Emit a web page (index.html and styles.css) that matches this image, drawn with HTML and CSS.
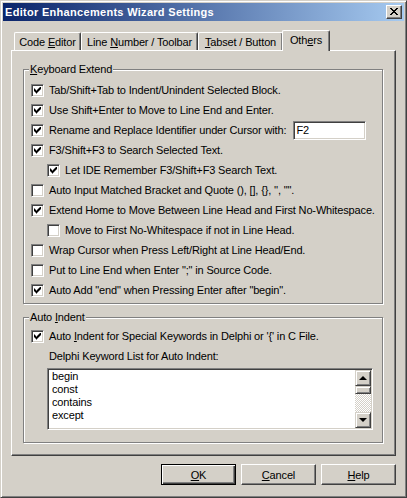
FILE: index.html
```
<!DOCTYPE html>
<html>
<head>
<meta charset="utf-8">
<link rel="stylesheet" href="styles.css">
</head>
<body>
<div class="window">
  <div class="titlebar">
    <span class="title">Editor Enhancements Wizard Settings</span>
    <span class="close"><svg width="16" height="14" viewBox="0 0 16 14"><path d="M4 3h2v1h1v1h2v-1h1v-1h2v1h-1v1h-1v1h-1v1h1v1h1v1h1v1h-2v-1h-1v-1h-2v1h-1v1h-2v-1h1v-1h1v-1h1v-1h-1v-1h-1v-1h-1z" fill="#000" shape-rendering="crispEdges"/></svg></span>
  </div>
  <div class="client">
    <div class="tabs">
      <div class="tab t1"><span>Code <u>E</u>ditor</span></div>
      <div class="tab t2"><span>Line <u>N</u>umber / Toolbar</span></div>
      <div class="tab t3"><span><u>T</u>abset / Button</span></div>
      <div class="tab t4 selected"><span>Oth<u>e</u>rs</span></div>
    </div>
    <div class="panel">
      <fieldset class="group g1">
        <legend><u>K</u>eyboard Extend</legend>
        <div class="row"><span class="cb checked"></span><span>Tab/Shift+Tab to Indent/Unindent Selected Block.</span></div>
        <div class="row"><span class="cb checked"></span><span>Use Shift+Enter to Move to Line End and Enter.</span></div>
        <div class="row"><span class="cb checked"></span><span>Rename and Replace Identifier under Cursor with:</span><span class="edit">F2</span></div>
        <div class="row"><span class="cb checked"></span><span>F3/Shift+F3 to Search Selected Text.</span></div>
        <div class="row sub"><span class="cb checked"></span><span>Let IDE Remember F3/Shift+F3 Search Text.</span></div>
        <div class="row"><span class="cb"></span><span>Auto Input Matched Bracket and Quote (), [], {}, '', "".</span></div>
        <div class="row"><span class="cb checked"></span><span>Extend Home to Move Between Line Head and First No-Whitespace.</span></div>
        <div class="row sub"><span class="cb"></span><span>Move to First No-Whitespace if not in Line Head.</span></div>
        <div class="row"><span class="cb"></span><span>Wrap Cursor when Press Left/Right at Line Head/End.</span></div>
        <div class="row"><span class="cb"></span><span>Put to Line End when Enter ";" in Source Code.</span></div>
        <div class="row"><span class="cb checked"></span><span>Auto Add "end" when Pressing Enter after "begin".</span></div>
      </fieldset>
      <fieldset class="group g2">
        <legend>Auto <u>I</u>ndent</legend>
        <div class="row"><span class="cb checked"></span><span>Auto <u>I</u>ndent for Special Keywords in Delphi or '{' in C File.</span></div>
        <div class="row plain"><span>Delphi Keyword List for Auto Indent:</span></div>
        <div class="listbox">
          <div class="items">
            <div>begin</div>
            <div>const</div>
            <div>contains</div>
            <div>except</div>
          </div>
          <div class="scrollbar">
            <div class="sbtn"><span class="arrow up"></span></div>
            <div class="thumb"></div>
            <div class="track"></div>
            <div class="sbtn"><span class="arrow down"></span></div>
          </div>
        </div>
      </fieldset>
    </div>
    <div class="buttons">
      <div class="btn default"><span><u>O</u>K</span></div>
      <div class="btn"><span><u>C</u>ancel</span></div>
      <div class="btn"><span><u>H</u>elp</span></div>
    </div>
  </div>
</div>
</body>
</html>
```
FILE: styles.css
```
html, body {
  margin: 0;
  padding: 0;
  background: #D4D0C8;
}
body {
  font-family: "Liberation Sans", Arial, sans-serif;
  font-size: 11px;
  letter-spacing: -0.15px;
  color: #000;
}
.window {
  width: 407px;
  height: 498px;
  box-sizing: border-box;
  border: 1px solid;
  border-color: #D4D0C8 #404040 #404040 #D4D0C8;
  box-shadow: inset 1px 1px 0 #fff, inset -1px -1px 0 #808080;
  padding: 2px;
  display: flex;
  flex-direction: column;
  background: #D4D0C8;
}
.titlebar {
  height: 18px;
  flex: none;
  background: linear-gradient(to right, #0A246A, #A6CAF0);
  display: flex;
  align-items: center;
  padding: 0 2px;
}
.title {
  flex: 1;
  color: #fff;
  font-weight: bold;
  font-size: 11px;
  letter-spacing: 0.3px;
  white-space: nowrap;
}
.close {
  width: 16px;
  height: 14px;
  box-sizing: border-box;
  background: #D4D0C8;
  border: 1px solid;
  border-color: #fff #404040 #404040 #fff;
  box-shadow: inset -1px -1px 0 #808080;
  display: block;
}
.close svg {
  display: block;
  margin: -1px;
}
.client {
  flex: 1;
  display: flex;
  flex-direction: column;
  padding: 9px 8px 10px 8px;
}
.tabs {
  display: flex;
  height: 20px;
  padding-left: 3px;
  flex: none;
}
.tab {
  box-sizing: border-box;
  height: 18px;
  margin-top: 2px;
  border-left: 1px solid #fff;
  border-top: 1px solid #fff;
  border-right: 1px solid #404040;
  box-shadow: inset -1px 0 0 #808080;
  border-radius: 2px 2px 0 0;
  display: flex;
  align-items: center;
  justify-content: center;
  white-space: nowrap;
  padding-top: 1px;
}
.t1 { width: 67px; }
.t2 { width: 117px; }
.t3 { width: 85px; }
.t4 { width: 48px; }
.tab.selected {
  height: 21px;
  margin-top: 0;
  margin-left: -1px;
  margin-bottom: -1px;
  position: relative;
  z-index: 1;
  background: #D4D0C8;
  padding-top: 0;
  padding-bottom: 3px;
}
.panel {
  flex: 1;
  box-sizing: border-box;
  border: 1px solid;
  border-color: #fff #404040 #404040 #fff;
  box-shadow: inset -1px -1px 0 #808080;
  padding: 12px 12px 0 11px;
  display: flex;
  flex-direction: column;
}
.group {
  margin: 0;
  padding: 0 0 3px 7px;
  border: 1px solid #808080;
  box-shadow: inset 1px 1px 0 #fff, 1px 1px 0 #fff;
  min-width: 0;
  width: 360px;
  box-sizing: border-box;
}
.group legend {
  padding: 0 1px;
  margin-left: -2px;
  line-height: 13px;
  background: #D4D0C8;
}
.g2 {
  margin-top: 7px;
  padding-bottom: 12px;
}
.row {
  height: 20px;
  display: flex;
  align-items: center;
  white-space: nowrap;
}
.g1 .row:first-of-type { margin-top: 4px; }
.g2 .row:first-of-type { margin-top: 2px; }
.row.sub { padding-left: 16px; }
.row.plain { padding-left: 18px; }
.cb {
  width: 13px;
  height: 13px;
  box-sizing: border-box;
  flex: none;
  background: #fff;
  border: 1px solid;
  border-color: #808080 #fff #fff #808080;
  box-shadow: inset 1px 1px 0 #404040, inset -1px -1px 0 #D4D0C8;
  margin-right: 5px;
  padding: 2px;
}
.cb.checked::after {
  content: "";
  display: block;
  width: 7px;
  height: 7px;
  background: #000;
  clip-path: polygon(0 2px, 1px 2px, 1px 3px, 2px 3px, 2px 4px, 3px 4px, 3px 3px, 4px 3px, 4px 2px, 5px 2px, 5px 1px, 6px 1px, 6px 0, 7px 0, 7px 3px, 6px 3px, 6px 4px, 5px 4px, 5px 5px, 4px 5px, 4px 6px, 3px 6px, 3px 7px, 2px 7px, 2px 6px, 1px 6px, 1px 5px, 0 5px);
}
.edit {
  margin-left: 7px;
  width: 73px;
  height: 19px;
  box-sizing: border-box;
  background: #fff;
  border: 1px solid;
  border-color: #808080 #fff #fff #808080;
  box-shadow: inset 1px 1px 0 #404040, inset -1px -1px 0 #D4D0C8;
  padding: 0 2px;
  display: flex;
  align-items: center;
}
.listbox {
  margin: 2px 0 0 16px;
  width: 326px;
  height: 62px;
  box-sizing: border-box;
  background: #fff;
  border: 1px solid;
  border-color: #808080 #fff #fff #808080;
  box-shadow: inset 1px 1px 0 #404040, inset -1px -1px 0 #D4D0C8;
  padding: 1px;
  display: flex;
}
.items {
  flex: 1;
  padding-left: 3px;
  line-height: 13px;
}
.scrollbar {
  width: 16px;
  display: flex;
  flex-direction: column;
}
.sbtn, .thumb {
  box-sizing: border-box;
  background: #D4D0C8;
  border: 1px solid;
  border-color: #D4D0C8 #404040 #404040 #D4D0C8;
  box-shadow: inset 1px 1px 0 #fff, inset -1px -1px 0 #808080;
  display: flex;
  align-items: center;
  justify-content: center;
}
.sbtn { height: 16px; }
.thumb { height: 8px; }
.track {
  flex: 1;
  background: repeating-conic-gradient(#fff 0 25%, #D4D0C8 0 50%) 0 0 / 2px 2px;
}
.arrow {
  width: 0;
  height: 0;
  border-left: 4px solid transparent;
  border-right: 4px solid transparent;
}
.arrow.up { border-bottom: 4px solid #000; }
.arrow.down { border-top: 4px solid #000; }
.buttons {
  display: flex;
  justify-content: flex-end;
  gap: 5px;
  margin-top: 8px;
  flex: none;
}
.btn {
  width: 75px;
  height: 21px;
  box-sizing: border-box;
  border: 1px solid;
  border-color: #fff #404040 #404040 #fff;
  box-shadow: inset -1px -1px 0 #808080;
  display: flex;
  align-items: center;
  justify-content: center;
}
.btn.default {
  border: 1px solid #000;
  box-shadow: inset 1px 1px 0 #fff, inset -1px -1px 0 #404040, inset -2px -2px 0 #808080;
}
```
